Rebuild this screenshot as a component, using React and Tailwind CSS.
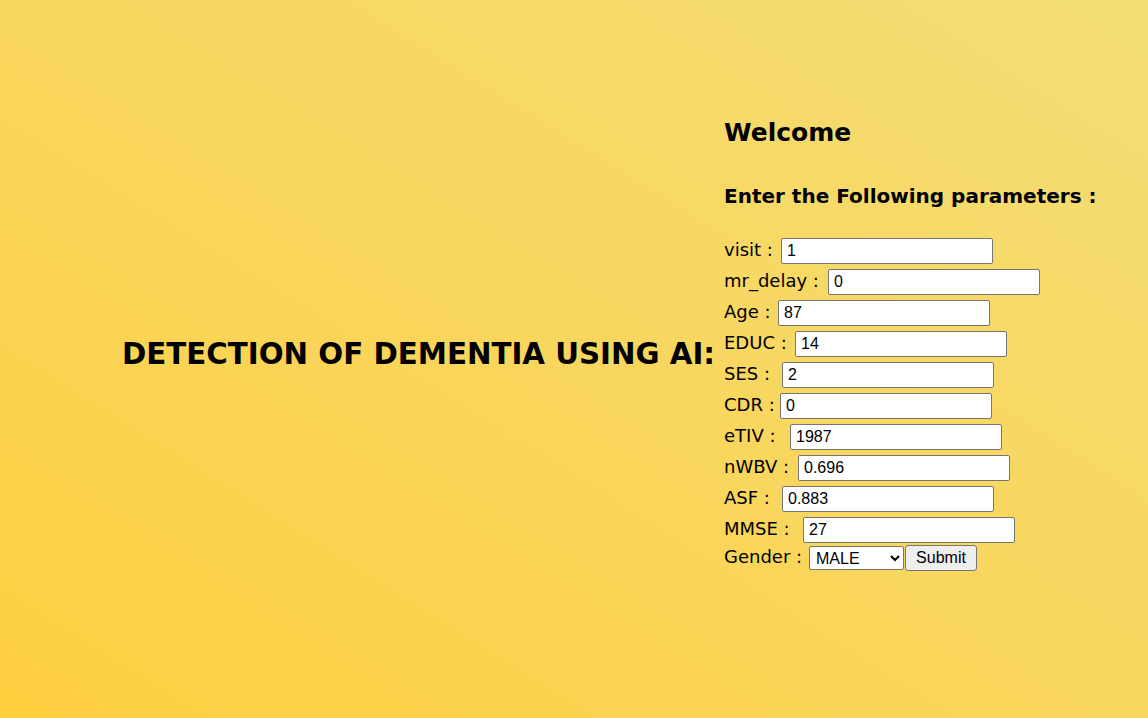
export default function App() {
  // label widths keep each input where the original page puts it
  const fields = [
    ["visit", "1", "w-[57px]"],
    ["mr_delay", "0", "w-[104px]"],
    ["Age", "87", "w-[54px]"],
    ["EDUC", "14", "w-[71px]"],
    ["SES", "2", "w-[58px]"],
    ["CDR", "0", "w-[56px]"],
    ["eTIV", "1987", "w-[66px]"],
    ["nWBV", "0.696", "w-[74px]"],
    ["ASF", "0.883", "w-[58px]"],
    ["MMSE", "27", "w-[79px]"],
  ];

  return (
    <div className="h-[718px] w-full overflow-hidden bg-gradient-to-tr from-[#fecf3e] to-[#f3dd75] font-['Comic_Sans_MS','DejaVu_Sans',sans-serif] text-black">
      <div className="flex h-full items-start pl-[122px]">
        {/* Title */}
        <h1 className="mt-[338px] w-[602px] text-[29.3px] font-bold leading-[32px] whitespace-nowrap">
          DETECTION OF DEMENTIA USING AI:
        </h1>

        {/* Form */}
        <div className="pt-[115px]">
          <h2 className="text-[25px] font-bold leading-[36px]">Welcome</h2>
          <h3 className="mt-[31px] text-[20px] font-bold leading-[28px]">
            Enter the Following parameters :
          </h3>
          <form className="mt-[28px] flex flex-col gap-[5px] text-[18px]">
            {fields.map(([name, value, w]) => (
              <div key={name} className="flex h-[26px] items-center">
                <label className={w + " -mt-[3px] whitespace-nowrap"}>{name} :</label>
                <input
                  defaultValue={value}
                  className="h-[26px] w-[212px] rounded-[2px] border border-[#767676] bg-white px-[5px] font-['Liberation_Sans',Arial,sans-serif] text-[16px] text-black outline-none"
                />
              </div>
            ))}
            <div className="-mt-[3px] flex h-[26px] items-center">
              <label className="-mt-[3px] w-[85px] whitespace-nowrap">Gender :</label>
              <select className="h-[24px] w-[95px] rounded-[2px] border border-[#767676] bg-white pl-[2px] font-['Liberation_Sans',Arial,sans-serif] text-[16px] text-black">
                <option>MALE</option>
                <option>FEMALE</option>
              </select>
              <button
                type="button"
                className="ml-[1px] h-[26px] w-[72px] rounded-[3px] border border-[#767676] bg-[#efefef] font-['Liberation_Sans',Arial,sans-serif] text-[16px] text-black"
              >
                Submit
              </button>
            </div>
          </form>
        </div>
      </div>
    </div>
  );
}
